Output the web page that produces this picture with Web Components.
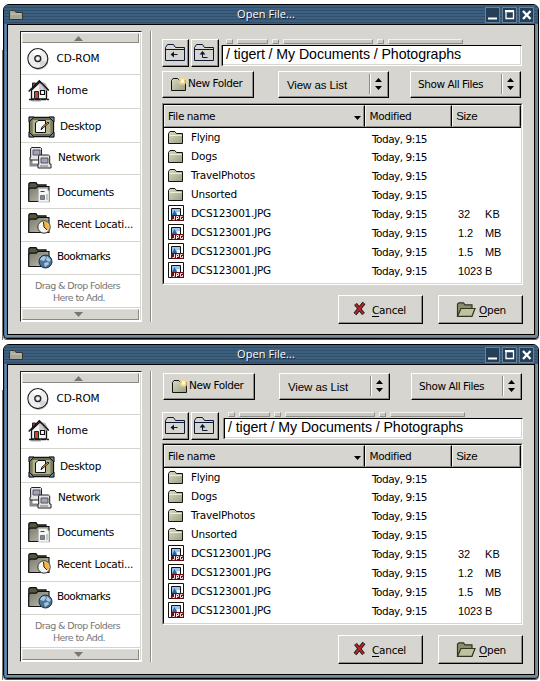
<!DOCTYPE html>
<html lang="en"><head><meta charset="utf-8"><title>Open File</title>
<style>
body{margin:0;width:540px;height:682px;background:#fff;overflow:hidden;font:10.5px/14px "DejaVu Sans",sans-serif;color:#000;display:flex;flex-direction:column;box-sizing:border-box;border-bottom:1px solid #d8d8d8}
</style></head><body>
<file-dialog></file-dialog>
<file-dialog variant="tools-first"></file-dialog>
<script>
const FOLDER = (x,y,w,h,f='url(#g)') => `<path d="M${x+.5} ${y+h-.5}V${y+2.5}l1.5-2h${w*.32}l1.7 2H${x+w-.5}V${y+h-.5}z" fill="${f}" stroke="#14140c"/>`;
const GRAD = `<defs><linearGradient id="g" x2="1" y2="1"><stop stop-color="#d9dbc4"/><stop offset="1" stop-color="#9b9e84"/></linearGradient><linearGradient id="m" x2="1" y2="1"><stop stop-color="#77786a"/><stop offset="1" stop-color="#c4c5b6"/></linearGradient></defs>`;
const BIGF = `<path d="M.8 19V1.8L2 .7h6l1.5 2.2H18v4" fill="#55563f" stroke="#111" stroke-width="1.2"/><path d="M.8 19.500V7.5l1.4-1.4h6l1.5-1.6H21V19.500z" fill="url(#m)" stroke="#111" stroke-width="1.1"/>`;
const ICONS = {
cd:`<circle cx="11.5" cy="11.8" r="10" fill="#aaa"/><circle cx="10.8" cy="10.6" r="10" fill="#eee" stroke="#222" stroke-width="1.1"/><path d="M10.8 10.6 5 3.500A9 9 0 0 1 15 2.500z" fill="#fff"/><path d="M10.800 10.600 19 14a9 9 0 0 1-5 5z" fill="#d4d4d4"/><circle cx="10.800" cy="10.600" r="3" fill="#ccc" stroke="#222" stroke-width="1.300"/><circle cx="10.800" cy="10.600" r="1.300" fill="#fff"/>`,
home:`<path d="M1 19.500h20" stroke="#222" stroke-width="1.500" stroke-dasharray="5 1"/><path d="M3 20.800h10" stroke="#777"/><path d="M4.500 3h3v5h-3z" fill="#b43c2c" stroke="#222"/><path d="M3.500 10v9h15V9L12 2z" fill="#f4f4f4" stroke="#111" stroke-width="1.300"/><path d="m11.500 1.500 6 1.500 3.500 7.500h-4z" fill="#b8b8b8"/><path d="M.7 11.500 11.300.8l9.500 9.700" fill="none" stroke="#111" stroke-width="1.500"/><path d="M12 3v7m2-6v7m2-5v5" stroke="#777" stroke-width=".6"/><path d="M6.500 11.500h4v7h-4z" fill="#cf4532" stroke="#222"/><path d="M12.500 10.500h4v4h-4z" fill="#fff" stroke="#111" stroke-width="1.200"/>`,
desktop:`<path d="M1.500 1.500h24v19h-24z" fill="#8e906c" stroke="#111" stroke-width="1.300"/><path d="M4 3.500h19v15H4z" fill="#b0b28c" stroke="#686a50"/><path d="M1 1h5L1 6zM26 1h-5l5 5zM1 21h5l-5-5zM26 21h-5l5-5z" fill="#7585a5" stroke="#111"/><path d="M7.500 7 10 4.500h7.500v12h-10z" fill="#f5f5f5" stroke="#111"/><path d="m13 14 1-3 6-5 1 1-6 5z" fill="#ffb829" stroke="#222"/>`,
network:`<path d="M2 13v5h7" fill="none" stroke="#888" stroke-width="3"/><path d="m1.500 2 1-1.500h9l1 1V10H14v3H1v-3h.7z" fill="#e5e3e6" stroke="#222"/><path d="M4 3h7v5H4z" fill="#a2a0bd" stroke="#555"/><path d="m9.500 9 1-1h9l1.200 1v8H22v4H9v-4h.7z" fill="#e5e3e6" stroke="#222"/><path d="M12 11h7v5h-7z" fill="#a2a0bd" stroke="#555"/><path d="M11 19h8" stroke="#777"/>`,
docs:BIGF+`<path d="M10.500 6.500h8l2.500 3V20H10.500z" fill="#f4f4f2" stroke="#bbb" stroke-width=".8"/><path d="M12.500 9.500h4" stroke="#444"/><path d="M12.500 13.500h4v4h-4z" fill="#7189a5" stroke="#444" stroke-width=".6"/><path d="M18 13h2m-2 2h2m-2 2h2" stroke="#999"/>`,
recent:BIGF+`<circle cx="16" cy="14" r="6.200" fill="#f3f3ef" stroke="#333"/><path d="M16 14V8.500a5.500 5.500 0 0 1 4 9z" fill="#f3b440"/><path d="m15.500 9 .5 5 3 3" fill="none" stroke="#222"/>`,
books:BIGF+`<circle cx="17.500" cy="14.500" r="6.500" fill="#4c7295" stroke="#14314e"/><path d="M12 13q1-4 5-4l1 2-2 3zm7-4 4 4-2 2-3-2zm-3 7 4-1 1 2-4 3z" fill="#a9c8de"/>`,
nav:`<path d="M.5 16.500V3.500l2-3h6l2 3h9v13zM.5 5.500h19" fill="none" stroke="#0b1734"/><path d="M6 10.500h6.500" stroke="#0b1734"/><path d="M5.500 10.500l3.500-3v6z" fill="#0b1734"/>`,
up:`<path d="M.5 16.500V3.500l2-3h6l2 3h9v13zM.5 5.500h19" fill="none" stroke="#0b1734"/><path d="M13.500 13.500h-5v-5" fill="none" stroke="#0b1734"/><path d="M5.500 10.500h6l-3-3.500z" fill="#0b1734"/>`,
folder:GRAD+FOLDER(0,0,15,13)+`<path d="M1.500 4.500h12" stroke="#ecedd8"/>`,
newf:GRAD+FOLDER(0,1,15,13)+`<circle cx="11.500" cy="4" r="4" fill="#f7d878" opacity=".75"/><circle cx="11.500" cy="4" r="2" fill="#fffbe2"/>`,
title:`<path d="M.5 9.500V1.500L1.500.5h4l1.500 2h6.500v7z" fill="#a6a796" stroke="#303735"/><path d="M2 4h10" stroke="#c9cab9"/>`,
openf:`<path d="M1.500 14V2L3 .8h4.500l1.500 2h7V6" fill="#8b8e6e" stroke="#34361f" stroke-width="1.200"/><path d="M1.500 14.300 5 6.500h14l-3 7.800z" fill="#bfc2a0" stroke="#34361f" stroke-width="1.200"/>`,
jpg:`<path d="M.5.500h15v15H.5z" fill="#fff" stroke="#111"/><path d="M3.500 3.500h9v7h-9z" fill="#9ec7ec" stroke="#111"/><path d="m4 10 2.500-5L9 10z" fill="#2465a5"/><path d="M9 7h3v3H9z" fill="#e7f2fa"/><path d="M3 10h13v6H3z" fill="#6d0a0f"/><path d="M6.500 11v3.500H4.500m4 .5v-3.500h2v2h-2m6-2h-2v3h2v-1.500" fill="none" stroke="#fff" stroke-width=".9"/>`,
cross:`<path d="M2.500 2 10.500 12M11 1 2 12" stroke="#151515" stroke-width="3.600"/><path d="M2.500 2 10.500 12M11 1 2 12" stroke="#b3252d" stroke-width="2"/>`,
upTri:`<path d="M0 5h9L4.500 0z" fill="#777771"/>`,
downTri:`<path d="M0 0h9L4.500 5z" fill="#777771"/>`,
sort:`<path d="M0 0h7L3.500 4z"/>`,
spin:`<path d="M0 4h7L3.500 0zM0 8h7l-3.500 4z"/>`,
min:`<path d="M0 8.500h9" stroke="#fff" stroke-width="2"/>`,
max:`<path d="M1 1.500h7.500v7H1z" fill="none" stroke="#fff" stroke-width="1.300"/><path d="M0 1h9" stroke="#fff" stroke-width="2"/>`,
close:`<path d="m1 1 7.500 8M8.500 1 1 9" stroke="#fff" stroke-width="2.300"/>`
};
class Base extends HTMLElement{
  constructor(){super();this.attachShadow({mode:'open'})}
  connectedCallback(){this.shadowRoot.innerHTML=`<style>*{box-sizing:border-box}${this.css()}</style>${this.html()}`;this.ready&&this.ready()}
  a(n,d=''){return this.getAttribute(n)??d}
}
const define=(name,css,html,ready)=>{
  const C=class extends Base{css(){return css.call(this)}html(){return html.call(this)}};
  if(ready)C.prototype.ready=ready;
  customElements.define(name,C);
};
define('px-icon',()=>`:host{display:block;flex:none}svg{display:block;overflow:visible}`,
 function(){const n=this.a('name');return `<svg width="${this.a('w')}" height="${this.a('h')}">${/docs|recent|books/.test(n)?GRAD:''}${ICONS[n]}</svg>`});

define('side-item',function(){return `:host{display:flex;align-items:flex-start;height:${this.a('h')}px;border-bottom:1px solid #d5d4cc;padding-left:${this.a('ix')}px;box-sizing:border-box}px-icon{margin-top:${this.a('iy')}px}.t{margin:${this.a('ty')}px 0 0 ${this.a('gap')}px}`},
 function(){return `<px-icon name="${this.a('icon')}" w="${this.a('iw')}" h="21"></px-icon><div class="t"><slot></slot></div>`});

define('scroll-stepper',()=>`:host{display:flex;height:10px;margin:0 1px;background:#d6d5cf;border:1px solid #e4e3de;border-right-color:#8a8a83;border-bottom-color:#8a8a83;align-items:center;justify-content:center;padding-right:5px}`,
 function(){return `<px-icon name="${this.a('dir')}Tri" w="9" h="5"></px-icon>`});

define('side-bar',()=>`:host{display:block;width:122px;height:291px;background:#fff;border:1px solid #222;border-right-color:#fff;border-bottom-color:#fff;padding-top:1px}.in{border-right:1px solid #d6d5cf}.drop{height:33px;border-bottom:1px solid #d5d4cc;color:#777;padding-top:5px}.drop ui-label{line-height:12px}scroll-stepper:last-of-type{margin-top:1px;height:11px}`,
 ()=>`<div class="in"><scroll-stepper dir="up"></scroll-stepper>
 <side-item h="32" icon="cd" ix="6" iw="22" iy="5" gap="7.500" ty="8"><ui-label w="43">CD-ROM</ui-label></side-item>
 <side-item h="34" icon="home" ix="7" iw="22" iy="5" gap="7" ty="8"><ui-label w="31">Home</ui-label></side-item>
 <side-item h="34" icon="desktop" ix="7" iw="27" iy="7" gap="5" ty="10"><ui-label w="41">Desktop</ui-label></side-item>
 <side-item h="32" icon="network" ix="8" iw="22" iy="4" gap="7" ty="7"><ui-label w="42">Network</ui-label></side-item>
 <side-item h="34" icon="docs" ix="7" iw="22" iy="7" gap="7" ty="10"><ui-label w="57">Documents</ui-label></side-item>
 <side-item h="33" icon="recent" ix="7" iw="22" iy="4" gap="7" ty="8"><ui-label w="76">Recent Locati...</ui-label></side-item>
 <side-item h="33" icon="books" ix="7" iw="22" iy="5" gap="7" ty="7"><ui-label w="53">Bookmarks</ui-label></side-item>
 <div class="drop"><ui-label w="85" size="9.5" style="margin-left:14px">Drag &amp; Drop Folders</ui-label><ui-label w="52" size="9.5" style="margin-left:32px">Here to Add.</ui-label></div>
 <scroll-stepper dir="down"></scroll-stepper></div>`);

define('push-button',function(){return `:host{display:flex;width:${this.a('w')}px;height:${this.a('h',28)}px;background:#d6d5cf;border:1px solid #fff;border-right-color:#000;border-bottom-color:#000;box-shadow:inset -1px -1px #8d8c86;box-sizing:border-box;align-items:flex-start;flex:none}`},()=>`<slot></slot>`);

define('option-menu',()=>`.g{flex:none;width:2px;height:20px;margin-top:2px;border-left:1px solid #8d8c86;border-right:1px solid #fff}:host{display:block}px-icon{margin:6px 0 0 4px}.t{width:90px;flex:none;padding-top:6px}`,
 ()=>`<push-button w="111" h="27"><div class="t"><slot></slot></div><div class="g"></div><px-icon name="spin" w="7" h="12"></px-icon></push-button>`);

define('tool-row',()=>`:host{display:flex;height:27px}option-menu{margin-left:24px}option-menu+option-menu{margin-left:21px}px-icon{margin:5px 0 0 8px}`,
 ()=>`<push-button w="92" h="27"><px-icon name="newf" w="15" h="15"></px-icon><ui-label w="54.500" style="margin:4px 0 0 2px">New Folder</ui-label></push-button>
 <option-menu><ui-label w="60" font="Liberation Sans" size="11.5" style="margin-left:8px">View as List</ui-label></option-menu>
 <option-menu><ui-label w="65" style="margin:-1px 0 0 7px">Show All Files</ui-label></option-menu>`);

define('path-row',()=>`:host{display:flex;height:28px}push-button+push-button{margin-left:2px}px-icon{margin:4px 0 0 2px}
 .p{margin-left:var(--px,2px);width:301px}.tabs{display:flex;gap:4px;padding-left:4px;height:6px;align-items:flex-start}
 .tabs i{height:5px;background:#c9c8c2;border:1px solid #f3f3ee;border-right-color:#8d8c86;border-bottom-color:#8d8c86}
 .e{height:21px;width:var(--ew,300px);background:#fff;border:1px solid #8d8c86;border-top-color:#000;border-left-color:#000;border-right-color:#fff;border-bottom-color:#fff;box-shadow:-1px 0 #8d8c86,inset -1px -1px #d6d5cf}`,
 ()=>`<push-button w="27"><px-icon name="nav" w="20" h="17"></px-icon></push-button><push-button w="28"><px-icon name="up" w="20" h="17"></px-icon></push-button>
 <div class="p"><div class="tabs">${[7,31,7,90,7,75].map(w=>`<i style="width:${w}px"></i>`).join('')}</div><div class="e"><ui-label w="235" font="Liberation Sans" size="14.2" style="margin-left:3px;line-height:16px">/ tigert / My Documents / Photographs</ui-label></div></div>`);

define('file-row',()=>`:host{display:flex;height:19px;align-items:flex-start}px-icon{margin-left:4px}.n{width:208px}.n,.m{display:flex;flex:none}.m{width:86px}.s{display:flex}`,
 function(){const n=this.a('name'),j=n.endsWith('JPG');return `<div class="n"><px-icon name="${j?'jpg':'folder'}" w="${j?16:15}" h="16" style="margin-top:${j?1:3}px"></px-icon><ui-label w="${this.a('w')}" style="margin:2px 0 0 ${j?7:8}px">${n}</ui-label></div><div class="m"><ui-label w="55" style="margin-top:${this.a('dy',3)}px">Today, 9:15</ui-label></div>${this.a('size')?`<div class="s"><div style="width:27px"><ui-label font="Liberation Sans" size="11" w="${this.a('sw')}" style="margin-top:3px">${this.a('size')}</ui-label></div><ui-label font="Liberation Sans" size="11" w="${this.a('uw')}" style="margin-top:3px">${this.a('unit')}</ui-label></div>`:''}`});

define('file-table',()=>`:host{display:block;width:361px;height:182px;background:#fff;border:1px solid #8d8c86;border-right-color:#fff;border-bottom-color:#fff}
 .in{height:180px;border:1px solid #000;border-right-color:#d6d5cf;border-bottom-color:#d6d5cf}
 .h{display:flex;height:23px;border-bottom:1px solid #000;background:#d6d5cf}.c{border:1px solid #f5f5f0;border-bottom-color:#8d8c86;border-right:1px solid #000;display:flex;padding:3px 0 0 3px;box-shadow:inset -1px 0 #8d8c86}`,
 ()=>`<div class="in"><div class="h"><div class="c" style="width:202px"><ui-label w="47">File name</ui-label><px-icon name="sort" w="7" h="4" style="margin:7px 0 0 139px"></px-icon></div><div class="c" style="width:87px"><ui-label w="42">Modified</ui-label></div><div class="c" style="width:69px"><ui-label w="21" font="Liberation Sans" size="11.5">Size</ui-label></div></div>
 <div class="r"><file-row name="Flying" w="29" dy="4"></file-row><file-row name="Dogs" w="26"></file-row><file-row name="TravelPhotos" w="64"></file-row><file-row name="Unsorted" w="46"></file-row>
 ${[['32',12,'KB',15],['1.2',15,'MB',16],['1.5',15,'MB',16],['1023',24,'B',8]].map(r=>`<file-row name="DCS123001.JPG" w="80" size="${r[0]}" sw="${r[1]}" unit="${r[2]}" uw="${r[3]}"></file-row>`).join('')}</div></div>`);

define('title-bar',()=>`:host{display:flex;height:19px;background:repeating-linear-gradient(#3e607f 0 2px,#314f6c 2px 3px);align-items:flex-start}
 .ti{margin:5px 0 0 5px}ui-label{margin:2px 0 0 214px;color:#fff;text-shadow:1px 1px #14202e}.b{display:flex;gap:2px;margin:2px 0 0 190px}.b div{width:15px;height:16px;border:1px solid #66839b;background:#263f58;padding:2px}`,
 ()=>`<px-icon class="ti" name="title" w="14" h="10"></px-icon><ui-label w="58" font="Open Sans" size="11">Open File...</ui-label><div class="b"><div><px-icon name="min" w="10" h="10"></px-icon></div><div><px-icon name="max" w="10" h="10"></px-icon></div><div><px-icon name="close" w="10" h="10"></px-icon></div></div>`);

define('file-dialog',()=>`:host{display:block;height:340px;padding:4px 0 0 3px;box-sizing:border-box;flex:none;background:linear-gradient(90deg,transparent 2px,#81766e 2px 3px,transparent 3px) 0 50px no-repeat}
 .w{width:536px;height:335px;border:1px solid #000;border-radius:6px 6px 4px 4px;background:linear-gradient(90deg,#41668a,#6c93bb 2px,#41668a 3px,#5c7486 530px,#8799a5);overflow:hidden;box-shadow:0 1px #565a60}
 .c{margin:0 3px;height:311px;border:1px solid #000;background:#d6d5cf;display:flex;padding:6px 0 0 12px;box-shadow:0 2px #7b8d9c}
 .d{width:2px;height:291px;border-left:1px solid #8d8c86;border-right:1px solid #fff;margin:0 10px 0 8px;flex:none}side-bar{flex:none}
 .m{width:362px;flex:none;display:flex;flex-direction:column}.a{display:flex;margin:10px 0 0 176px;gap:15px}.a px-icon{margin-top:6px}`,
 function(){const alt=this.a('variant');return `<div class="w"><title-bar></title-bar><div class="c"><side-bar></side-bar><div class="d"></div><div class="m">
 ${alt?`<tool-row style="margin:2px 0 0 1px"></tool-row><path-row style="margin:12px 0 3px;--px:5px;--ew:299px"></path-row>`:`<path-row style="margin-top:8px;--px:3px"></path-row><tool-row style="margin:4px 0 5px"></tool-row>`}
 <file-table></file-table>
 <div class="a"><push-button w="85" h="29"><px-icon name="cross" w="13" h="14" style="margin-left:14px"></px-icon><ui-label w="34" style="margin:7px 0 0 6px"><u>C</u>ancel</ui-label></push-button><push-button w="85" h="29"><px-icon name="openf" w="20" h="15" style="margin-left:17px"></px-icon><ui-label w="27" style="margin:7px 0 0 3px"><u>O</u>pen</ui-label></push-button></div>
 </div></div></div>`});

/* A one-line label whose tracking is adjusted so that it fills its "w" width. */
define('ui-label',function(){return `:host{display:block;white-space:nowrap;width:${this.a('w')}px;font-size:${this.a('size','10.5')}px;font-family:"${this.a('font','DejaVu Sans')}",sans-serif}span{display:inline-block}::slotted(u){text-underline-offset:2px}`},
 ()=>`<span><slot></slot></span>`,
 function(){const s=this.shadowRoot.querySelector('span'),n=this.textContent.length;s.style.letterSpacing=(+this.a('w')-s.getBoundingClientRect().width)/n+'px'});
</script></body></html>
